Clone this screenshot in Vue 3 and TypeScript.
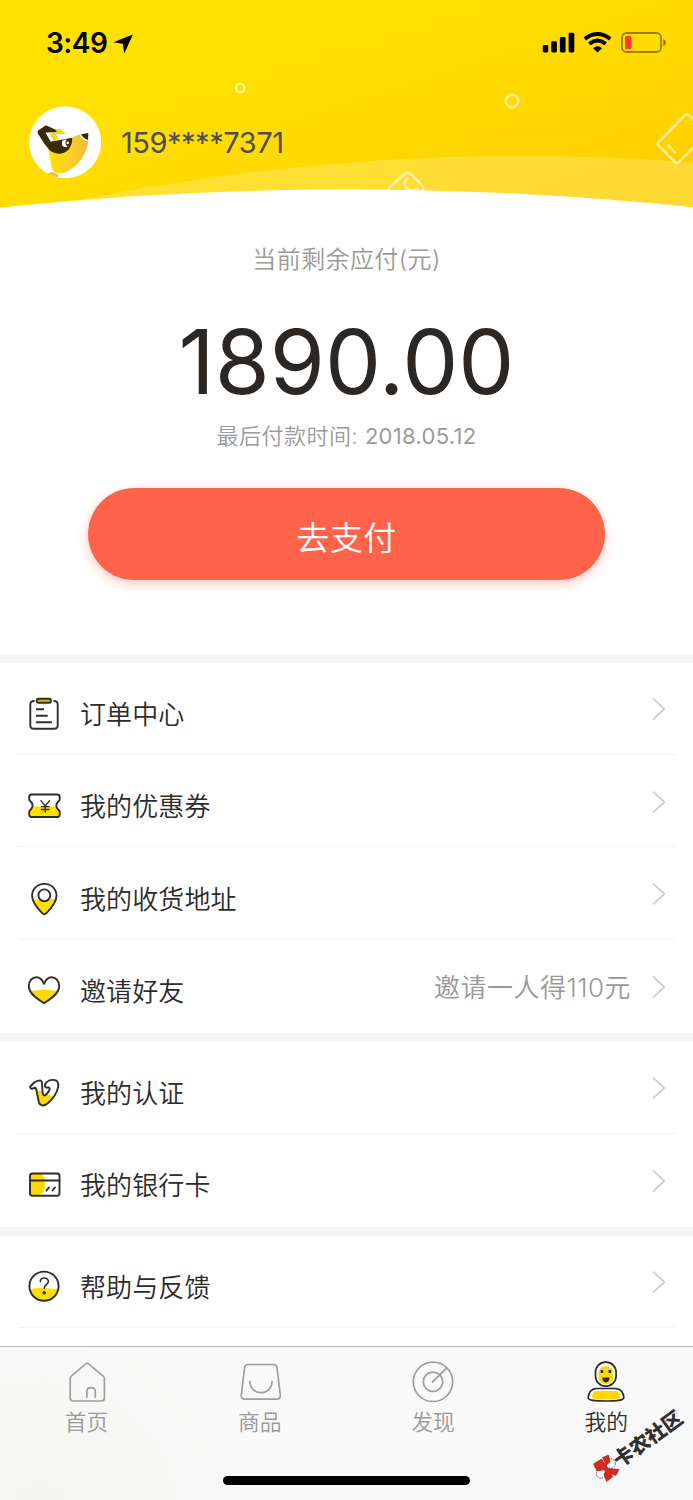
<script setup lang="ts">
type IconName = 'order' | 'coupon' | 'address' | 'invite' | 'verify' | 'card' | 'help'
type TabName = 'home' | 'goods' | 'discover' | 'mine'

interface MenuItem {
  icon: IconName
  label: string
  note?: string
}

const groups: MenuItem[][] = [
  [
    { icon: 'order', label: '订单中心' },
    { icon: 'coupon', label: '我的优惠券' },
    { icon: 'address', label: '我的收货地址' },
    { icon: 'invite', label: '邀请好友', note: '邀请一人得110元' },
  ],
  [
    { icon: 'verify', label: '我的认证' },
    { icon: 'card', label: '我的银行卡' },
  ],
  [{ icon: 'help', label: '帮助与反馈' }],
]

const tabs: { name: TabName; label: string }[] = [
  { name: 'home', label: '首页' },
  { name: 'goods', label: '商品' },
  { name: 'discover', label: '发现' },
  { name: 'mine', label: '我的' },
]
const activeTab: TabName = 'mine'
</script>

<template>
  <div class="screen">
    <header class="hero">
      <svg class="hero-bg" viewBox="0 0 693 209" fill="none">
        <defs>
          <linearGradient id="sun" gradientUnits="userSpaceOnUse" x1="290" y1="20" x2="365" y2="255">
            <stop offset="0" stop-color="#ffe100" />
            <stop offset="0.3" stop-color="#ffde00" />
            <stop offset="1" stop-color="#ffd000" />
          </linearGradient>
        </defs>
        <rect width="693" height="209" fill="url(#sun)" />
        <path d="M30 210Q361.500 137 693 162.400V210Z" fill="#fff" fill-opacity=".2" />
        <g stroke="#fff" stroke-opacity=".58" stroke-width="2.500" stroke-linecap="round">
          <circle cx="240.200" cy="88" r="4.300" />
          <circle cx="512" cy="101" r="6.300" />
          <path d="M700 126L688.500 115Q686.700 113.500 685 115.200L658.500 142Q657 143.700 658.500 145.400L675.500 162.400Q677 163.800 678.600 162.400L700 141M668 145.500L674.700 152.500" />
          <path d="M390 194L388.500 190.500Q388 189 390 187L404.500 174Q407.700 171.500 411 174L422.500 186Q424.500 188 422.500 191M407.500 178C403 182 404.500 187.500 409.500 190.500Q414 191 417.500 188.500" />
        </g>
        <path d="M0 207.500Q346 171.500 693 207.200V209H0Z" fill="#fff" />
      </svg>

      <div class="status">
        <div class="clock">
          <span>3:49</span>
          <svg width="20" height="20" viewBox="0 0 20 20"><path d="M.3 8.300L19.900.4L11.300 19.500L9.800 9.800Z" /></svg>
        </div>
        <svg class="signals" width="127" height="22" viewBox="0 0 127 22" fill="none">
          <g fill="#000">
            <rect x="2.700" y="14" width="5.600" height="7.400" rx="1.400" />
            <rect x="11.200" y="10.300" width="5.700" height="11.100" rx="1.400" />
            <rect x="19.900" y="6" width="5.700" height="15.400" rx="1.400" />
            <rect x="28.600" y="1.700" width="5.700" height="19.700" rx="1.400" />
            <path d="M57.500 21.500L53 17.200Q57.500 13.400 62 17.200Z" />
          </g>
          <path d="M44.800 7.900Q57.500-2 70.200 7.900M49.300 12.800Q57.500 6.400 65.700 12.800" stroke="#000" stroke-width="3.900" />
          <rect x="82" y="2" width="39" height="19" rx="4.500" stroke="#000" stroke-opacity=".4" stroke-width="1.800" />
          <rect x="85" y="5" width="6.400" height="13" rx="1.500" fill="#ff3b30" />
          <path d="M123.300 8.200Q126 9 126 11.600Q126 14.200 123.300 15Z" fill="#000" fill-opacity=".45" />
        </svg>
      </div>

      <div class="user">
        <svg class="avatar" viewBox="26 33 217 217">
          <defs>
            <linearGradient id="beak" x1="0" x2="1">
              <stop offset="0" stop-color="#ffe000" />
              <stop offset=".5" stop-color="#fad224" />
              <stop offset="1" stop-color="#f5ba38" />
            </linearGradient>
            <clipPath id="disc"><circle cx="134.500" cy="141.500" r="108" /></clipPath>
          </defs>
          <circle cx="134.500" cy="141.500" r="108" fill="#fff" />
          <path d="M83 158L155 124L184 117Q190 131 204 135C200 178 170 222 128 234Q100 238 94 217Z" fill="url(#beak)" />
          <path d="M52 107L77 91L114 108L108 112L76 113L92 139L155 127Q158 142 146 162C133 180 105 181 88 166Q74 151 52 115Z" fill="#3a2b05" />
          <path d="M76 113H98L89 119L101 138L91 140Z" fill="#fff" />
          <path d="M103 103L119 101L137 116L107 118L117 130L101 137L87 116L111 112Z" fill="#fcd21a" />
          <path d="M106 118L136 121L181 115L155 128L102 138L116 130Z" fill="#fff" />
          <path d="M182 118L204 114L203 135Q188 130 182 118Z" fill="#3a2b05" />
          <path d="M179 117Q186 134 203 137" fill="none" stroke="#fff" stroke-width="3" />
          <circle cx="136" cy="145" r="11.500" fill="#fff" />
          <path d="M141 132Q129 143 141 155L149 152V134Z" fill="#3a2b05" />
          <circle cx="142" cy="143.500" r="4" fill="#fff" />
          <path d="M80 236L97 230L114 239L108 251L80 246Z" fill="#f5bd45" clip-path="url(#disc)" />
        </svg>
        <span class="phone">159****7371</span>
      </div>
    </header>

    <section class="bill">
      <p class="caption">当前剩余应付(元)</p>
      <p class="amount">1890.00</p>
      <p class="due">最后付款时间: <span>2018.05.12</span></p>
      <button class="pay" type="button">去支付</button>
    </section>

    <main class="menu">
      <ul v-for="(group, g) in groups" :key="g" class="group">
        <li v-for="item in group" :key="item.icon" class="row">
          <svg class="icon" viewBox="0 0 36 36" fill="none" stroke="#302d2a" stroke-width="1.900" stroke-linecap="round" stroke-linejoin="round">
            <template v-if="item.icon === 'order'">
              <path d="M7.800 5Q4.300 5 4.300 8.500V29.500Q4.300 32.700 7.500 32.700H28.500Q31.700 32.700 31.700 29.500V8.500Q31.700 5 28.200 5" />
              <rect x="10.700" y="2.800" width="14.200" height="4" rx="1.800" fill="#dcbb08" />
              <path d="M10.700 13.300H17.300M10.700 19.700H20.900M10.700 26.300H25.200" />
            </template>
            <template v-else-if="item.icon === 'coupon'">
              <path d="M6.500 18.600H30.500Q30.500 20.800 33.700 22.500V27Q33.700 29 31.700 29H5.200Q3.200 29 3.200 27V22.500Q6.500 20.800 6.500 18.600Z" fill="#ffe100" stroke="none" />
              <path d="M5.700 6.500H31.200Q33.700 6.500 33.700 9V11.500Q33.700 12.500 32.700 13Q27.800 17.600 32.700 22.200Q33.700 22.700 33.700 23.700V26.500Q33.700 29 31.200 29H5.700Q3.200 29 3.200 26.500V23.700Q3.200 22.700 4.200 22.200Q9.100 17.600 4.200 13Q3.200 12.500 3.200 11.500V9Q3.200 6.500 5.700 6.500Z" />
              <path d="M14.900 12.600L19.200 18L23.500 12.600M19.200 18V24.300M15.400 18.700H23M15.400 21.500H23" stroke-width="1.300" />
            </template>
            <template v-else-if="item.icon === 'address'">
              <path d="M8 18.600Q13 18.500 15 19Q18.300 21 22 19Q27 17 29.500 19.500Q26 26 20 32.400Q18.300 34 16.600 32.400Q10.500 26 8 18.600Z" fill="#ffde00" stroke="none" />
              <path d="M18.300 2.900C11 2.900 6.100 8.300 6.100 14.800C6.100 21 11.300 27.200 16.200 32.200Q18.300 34.300 20.400 32.200C25.300 27.200 30.500 21 30.500 14.800C30.500 8.300 25.600 2.900 18.300 2.900Z" />
              <circle cx="18.300" cy="14.300" r="5.900" />
            </template>
            <template v-else-if="item.icon === 'invite'">
              <path d="M5.500 18.300Q17 14.500 31 18.300C28 23 22.500 27.200 18 30.300C13 27 8 23 5.500 18.300Z" fill="#ffd800" stroke="none" />
              <path d="M18 10.800C16 6.200 13.500 4.300 10.500 4.300C5.800 4.300 2.800 8.300 2.800 13C2.800 20 10 25.200 18 30.200C26 25.200 33.200 20 33.200 13C33.200 8.300 30.200 4.300 25.500 4.300C22.500 4.300 20 6.200 18 10.800Z" />
            </template>
            <template v-else-if="item.icon === 'verify'">
              <path d="M11 17Q14 15 16.300 16.500Q17 20 18.500 20.500L22 19Q24.500 21.800 28.300 21C26 26 21 30 17 30Q13.500 30 12.500 27Z" fill="#ffd800" stroke="none" />
              <path d="M4.200 11.500L8.500 7.300Q11 5.600 13.700 5.400Q15.700 5.500 16 8L16.500 17C16.700 20.500 18.300 21 19.800 19.700Q23.800 16 23.700 13.500C23.500 11.800 21.500 12.800 20.200 12.600Q18.500 12 19 9.800C20.300 6.500 23.500 4.800 27.500 4.900C31.500 5 32.600 7.500 32.200 11.500C31.500 17.500 26.500 24.500 21.500 28.500C17.500 31.700 13.800 30.800 12.800 27L10.600 16Q10.300 12.900 8.700 12.700L6.200 13.800Q3.900 13.500 4.200 11.500Z" />
            </template>
            <template v-else-if="item.icon === 'card'">
              <path d="M4.200 6.800H15.500Q19.400 10 19.400 16.300Q19.400 23.500 14.500 28.500H4.200Z" fill="#ffd800" stroke="none" />
              <rect x="4" y="6.500" width="29.500" height="22.200" rx="2.500" />
              <path d="M4 13.500H33.500M23 20.400L20.500 23.500M29 20.400L26.500 23.500" />
            </template>
            <template v-else>
              <path d="M4 20.300Q11 18.500 18 19.300T32.200 19.500C31 27 25 31.700 18 31.700C11 31.700 5 27 4 20.300Z" fill="#ffde00" stroke="none" />
              <circle cx="18" cy="17.200" r="14.600" />
              <path d="M14.300 12.600C14.300 7.700 22.400 7.800 22.400 12.400C22.400 15.300 18.200 15.400 18.200 19.300" stroke-width="1.600" />
              <circle cx="18.200" cy="23.800" r="1.300" fill="#302d2a" stroke-width="1" />
            </template>
          </svg>
          <span class="label">{{ item.label }}</span>
          <span v-if="item.note" class="note">{{ item.note }}</span>
          <svg class="chevron" width="14" height="24" viewBox="0 0 14 24"><path d="M1 1.500L12.300 12L1 22.500" fill="none" stroke="#cbc7c1" stroke-width="1.700" /></svg>
        </li>
      </ul>
    </main>

    <nav class="tabbar">
      <div class="tabs">
        <div v-for="tab in tabs" :key="tab.name" class="tab" :class="{ active: tab.name === activeTab }">
          <svg width="48" height="48" viewBox="0 0 48 48" fill="none" stroke="#9f9f9f" stroke-width="1.700" stroke-linecap="round" stroke-linejoin="round">
            <template v-if="tab.name === 'home'">
              <path d="M22.500 5.200Q24.200 3.700 25.900 5.200L40 16.800Q41.400 18 41.400 19.800V39Q41.400 42 38.400 42H10.200Q7.200 42 7.200 39V19.800Q7.200 18 8.600 16.800Z" />
              <path d="M23.900 38V32.300Q23.900 28.700 28.100 28.700T32.300 32.300V38" />
            </template>
            <template v-else-if="tab.name === 'goods'">
              <path d="M12.300 5.500H37.300Q40.700 5.500 41 8.900L44.300 36Q44.700 40.200 40.500 40.200H9.100Q4.900 40.200 5.300 36L8.600 8.900Q8.900 5.500 12.300 5.500Z" />
              <path d="M14 22.300C14 37.500 36 37.500 36 22.300" />
            </template>
            <template v-else-if="tab.name === 'discover'">
              <circle cx="24" cy="22.800" r="19.700" />
              <circle cx="24" cy="22.800" r="9.700" />
              <path d="M23.500 23.200L37 9.700" />
            </template>
            <template v-else>
              <rect x="13.500" y="3.100" width="20.600" height="24" rx="10" stroke="#2d2926" />
              <rect x="16.500" y="7.300" width="14.800" height="17.700" rx="6.500" fill="#ffd800" stroke="none" />
              <path d="M19.900 11V13.900M27.800 11V13.900" stroke="#2d2926" stroke-width="2.500" stroke-linecap="butt" />
              <path d="M20.200 18.500H27.600Q27 23.400 23.900 23.400T20.200 18.500Z" fill="#2d2926" stroke="none" />
              <path d="M14.500 29.500H33.500C38.500 29.500 41.800 34 41.800 38.500C41.800 41.500 35 42 24 42S6.200 41.500 6.200 38.500C6.200 34 9.500 29.500 14.500 29.500Z" stroke="#2d2926" />
              <path d="M15 31.900H33Q37 31.900 38 36.500Q38.300 39.900 34.500 39.900H13.500Q9.700 39.900 10 36.500Q11 31.900 15 31.900Z" fill="#ffd800" stroke="none" />
            </template>
          </svg>
          <span>{{ tab.label }}</span>
        </div>
      </div>
      <div class="home-indicator"></div>
    </nav>

    <div class="stamp">
      <svg width="28" height="28" viewBox="0 0 28 28">
        <g fill="#fff" stroke="#222" stroke-width=".8" stroke-dasharray="1.500 1"><circle cx="18.500" cy="9.500" r="4.800" /><circle cx="9" cy="19.500" r="4.800" /></g>
        <path d="M1.500 10L9.500 5L14 12L16 14.500L27 15.500L24 21.500L19.500 20L20.500 23L14.500 27.500L12 21L14 15.500L5 17ZM10.500 3.500L16.500 1L18 8L14 11.500Z" fill="#e0261c" stroke="#5a1512" stroke-width=".5" />
      </svg>
      <span>卡农社区</span>
    </div>
  </div>
</template>

<style>
body {
  margin: 0;
  background: #fff;
}
</style>

<style scoped>
.screen {
  position: relative;
  display: flex;
  flex-direction: column;
  width: 693px;
  height: 1500px;
  overflow: hidden;
  background: #fff;
  font-family: Inter, "Noto Sans CJK SC", sans-serif;
}

p,
ul {
  margin: 0;
  padding: 0;
}

.hero {
  position: relative;
  flex: none;
  height: 208px;
}

.hero-bg {
  position: absolute;
  top: 0;
  left: 0;
  width: 693px;
  height: 209px;
}

.status {
  position: relative;
  display: flex;
  justify-content: space-between;
  padding: 31px 26px 0 46px;
  height: 24px;
}

.clock {
  display: flex;
  align-items: center;
  gap: 6px;
  font-size: 28px;
  font-weight: 600;
  line-height: 24px;
  letter-spacing: -0.500px;
}

.clock svg {
  margin-top: 2px;
}

.user {
  position: relative;
  display: flex;
  align-items: center;
  gap: 20px;
  margin: 51px 0 0 28.500px;
}

.avatar {
  width: 72.400px;
  height: 72.400px;
}

.phone {
  margin-top: 2px;
  font-size: 29px;
  line-height: 36px;
  font-weight: 400;
  letter-spacing: -0.450px;
  color: #4f4d50;
}

.bill {
  display: flex;
  flex: none;
  flex-direction: column;
  align-items: center;
  box-sizing: border-box;
  height: 446px;
  padding-top: 37px;
}

.caption {
  font-size: 24px;
  line-height: 30px;
  letter-spacing: 0.400px;
  font-weight: 350;
  color: #9b9a95;
}

.amount {
  margin-top: 37px;
  font-size: 89px;
  line-height: 100px;
  color: #2b2725;
}

.due {
  margin-top: 9px;
  font-size: 22px;
  line-height: 30px;
  letter-spacing: 0.500px;
  font-weight: 350;
  color: #9b9b9b;
}

.due span {
  font-weight: 400;
  letter-spacing: 0.300px;
}

.pay {
  width: 517px;
  height: 92px;
  margin-top: 37px;
  padding: 7px 0 0;
  border: 0;
  border-radius: 46px;
  background: #ff644b;
  box-shadow: 0 4px 12px rgba(255, 100, 75, 0.350);
  color: #fff;
  font: 350 33px/40px Inter, "Noto Sans CJK SC", sans-serif;
  letter-spacing: 0.500px;
}

.group {
  border-top: 9px solid #f5f5f5;
  list-style: none;
}

.row {
  display: flex;
  align-items: center;
  position: relative;
  box-sizing: border-box;
  height: 92.500px;
  padding: 0 27px 0 26px;
}

.row:not(:last-child)::after,
.group:last-child .row::after {
  content: "";
  position: absolute;
  right: 18px;
  bottom: 0.600px;
  left: 18px;
  height: 1px;
  background: #f3f3f3;
}

.icon {
  width: 36px;
  height: 36px;
  margin: 9px 18px 0 0;
}

.label {
  margin-top: 11px;
  font-size: 26px;
  line-height: 36px;
  letter-spacing: 0.100px;
  font-weight: 350;
  color: #2b2b2b;
}

.note {
  margin-top: 3px;
  margin-left: auto;
  margin-right: 21px;
  font-size: 26px;
  line-height: 36px;
  letter-spacing: 0.500px;
  font-weight: 350;
  color: #999;
}

.chevron {
  margin-left: auto;
}

.note + .chevron {
  margin-left: 0;
}

.tabbar {
  position: absolute;
  right: 0;
  bottom: 0;
  left: 0;
  box-sizing: border-box;
  height: 154px;
  border-top: 1px solid #b5b5b5;
  background: radial-gradient(circle at 40px 170px, #f6f6f0, #f7f7f6 110px, #f9f9f9 230px);
}

.tabs {
  display: flex;
  padding-top: 12px;
}

.tab {
  display: flex;
  flex: 1;
  flex-direction: column;
  align-items: center;
  font-size: 21.800px;
  line-height: 30px;
  font-weight: 350;
  color: #999;
}

.tab.active {
  color: #2d2d2d;
}

.home-indicator {
  width: 247.500px;
  height: 9px;
  margin: 39px auto 0;
  border-radius: 5px;
  background: #000;
}

.stamp {
  position: absolute;
  top: 1454px;
  left: 592px;
  width: 28px;
  height: 28px;
}

.stamp span {
  position: absolute;
  top: -27px;
  left: 15px;
  width: 82px;
  font-size: 20px;
  line-height: 24px;
  font-weight: 900;
  text-align: center;
  white-space: nowrap;
  color: #2f2f2f;
  transform: rotate(-36deg);
}
</style>
